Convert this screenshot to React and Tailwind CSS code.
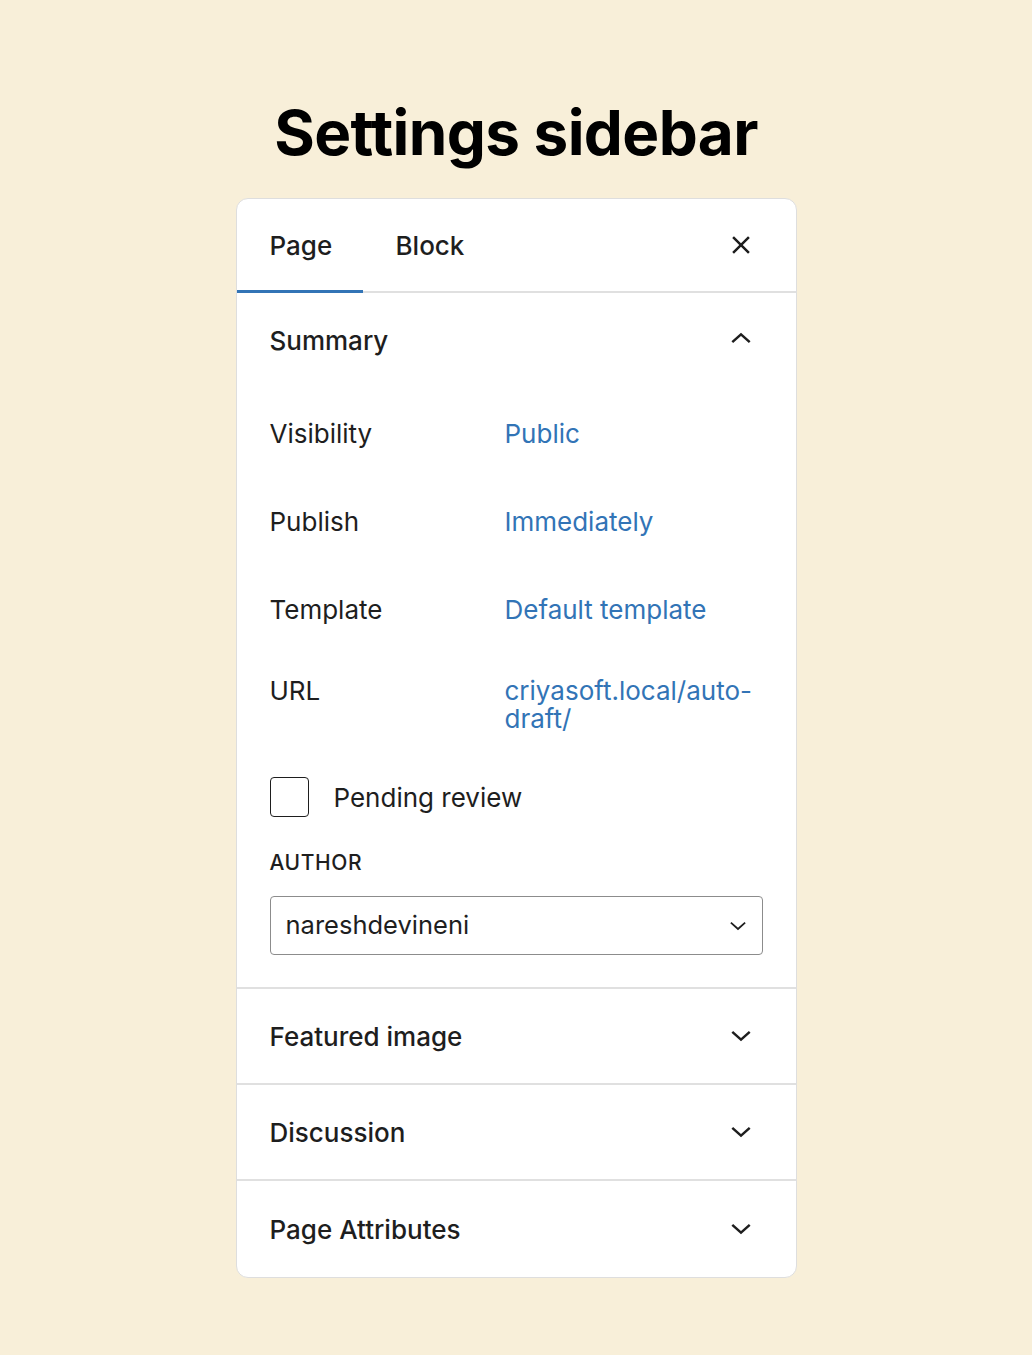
import React, { useState } from 'react'

const font = { fontFamily: 'Inter, "Noto Sans", sans-serif' }

function ChevronDown({ className, width = 2.7 }) {
  return (
    <svg viewBox="0 0 24 24" className={className} fill="none" stroke="currentColor" strokeWidth={width}>
      <path d="M2.5 7.5 12 16l9.5-8.5" />
    </svg>
  )
}

function ChevronUp({ className }) {
  return (
    <svg viewBox="0 0 24 24" className={className} fill="none" stroke="currentColor" strokeWidth="2.7">
      <path d="M2.5 16.5 12 8l9.5 8.5" />
    </svg>
  )
}

function CloseIcon({ className }) {
  return (
    <svg viewBox="0 0 24 24" className={className} fill="none" stroke="currentColor" strokeWidth="3">
      <path d="M2.5 2.5l19 19M21.5 2.5l-19 19" />
    </svg>
  )
}

function Row({ label, children, className = '' }) {
  return (
    <div className={`flex items-start ${className}`}>
      <span className="w-[235px] shrink-0 leading-[28px]">{label}</span>
      <a className="flex-1 leading-[28px] text-[#3274b6] cursor-pointer">{children}</a>
    </div>
  )
}

function CollapsedPanel({ title, last }) {
  return (
    <div className={`flex items-center justify-between h-[96px] px-[33px] ${last ? '' : 'border-b-2 border-[#e0e0e0]'}`}>
      <span className="font-medium">{title}</span>
      <ChevronDown className="w-[22px] h-[22px] mr-[11px]" />
    </div>
  )
}

export default function App() {
  const [tab, setTab] = useState('page')
  const [pending, setPending] = useState(false)

  return (
    <div className="min-h-screen bg-[#f8efd9] flex flex-col items-center pt-[97px] pb-[79px]" style={font}>
      <h1 className="text-[62px] leading-[72px] font-bold text-black tracking-[-0.6px]">Settings sidebar</h1>

      <div className="mt-[29px] w-[561px] bg-white rounded-xl border border-[#dedede] overflow-hidden text-[26px] text-[#1e1e1e]">
        {/* tabs */}
        <div className="flex items-stretch h-[94px] border-b-2 border-[#e0e0e0]">
          <button
            className="relative w-[126px] pl-[33px] text-left font-medium"
            onClick={() => setTab('page')}
          >
            Page
            {tab === 'page' && <span className="absolute left-0 right-0 -bottom-[2px] h-[3px] bg-[#3274b6]" />}
          </button>
          <button
            className="relative px-[33px] font-medium"
            onClick={() => setTab('block')}
          >
            Block
            {tab === 'block' && <span className="absolute left-0 right-0 -bottom-[2px] h-[3px] bg-[#3274b6]" />}
          </button>
          <div className="flex-1" />
          <button className="flex items-center pr-[45px]">
            <CloseIcon className="w-[20px] h-[20px]" />
          </button>
        </div>

        {/* summary */}
        <div className="px-[33px] pb-[32px] border-b-2 border-[#e0e0e0]">
          <div className="flex items-center justify-between h-[95px]">
            <span className="font-medium">Summary</span>
            <ChevronUp className="w-[22px] h-[22px] mr-[11px] -mt-[6px]" />
          </div>
          <div className="flex flex-col gap-[60px] mt-[32px]">
            <Row label="Visibility">Public</Row>
            <Row label="Publish">Immediately</Row>
            <Row label="Template">Default template</Row>
          </div>
          <Row label="URL" className="mt-[53px]">
            criyasoft.local/auto-
            <br />
            draft/
          </Row>

          <label className="flex items-center gap-[25px] mt-[44px] cursor-pointer">
            <span
              className="w-[39px] h-[40px] rounded-[4px] border-[1.5px] border-[#1e1e1e] flex items-center justify-center"
              onClick={() => setPending(!pending)}
            >
              {pending && <span className="w-[20px] h-[20px] bg-[#1e1e1e]" />}
            </span>
            <span>Pending review</span>
          </label>

          <div className="mt-[34px] text-[21px] font-medium leading-[24px] tracking-[0.6px]">AUTHOR</div>
          <div className="mt-[21px] flex items-center justify-between h-[59px] border-[1.5px] border-[#8c8c8c] rounded-[4px] pl-[15px] pr-[15px]">
            <span className="text-[25.5px]">nareshdevineni</span>
            <ChevronDown className="w-[18px] h-[18px]" width={2.4} />
          </div>
        </div>

        <CollapsedPanel title="Featured image" />
        <CollapsedPanel title="Discussion" />
        <CollapsedPanel title="Page Attributes" last />
      </div>
    </div>
  )
}
